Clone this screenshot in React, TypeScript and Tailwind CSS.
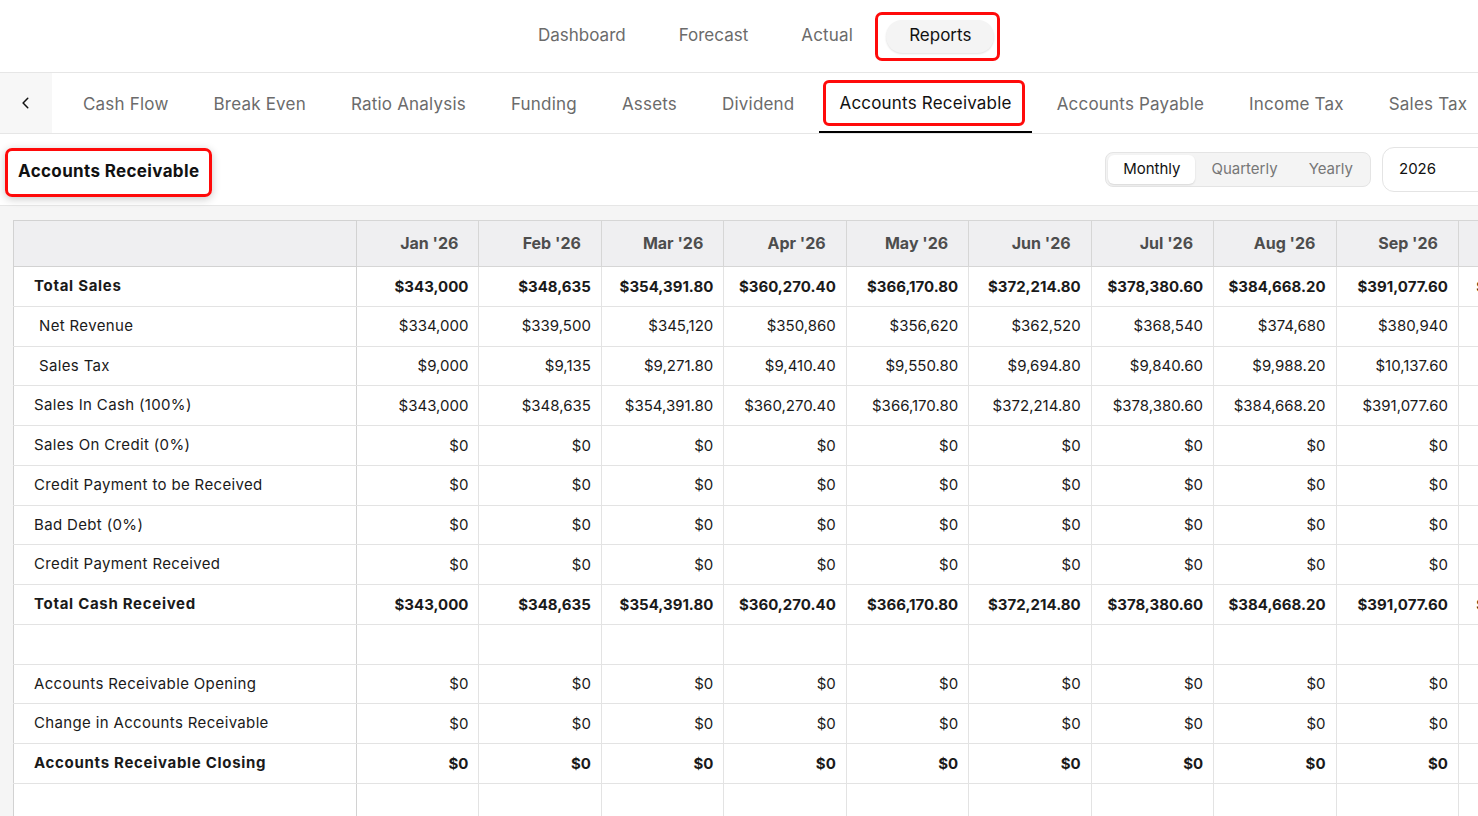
import React from "react";

const months = ["Jan '26","Feb '26","Mar '26","Apr '26","May '26","Jun '26","Jul '26","Aug '26","Sep '26","Oct '26","Nov '26","Dec '26"];
const net = [334000,339500,345120,350860,356620,362520,368540,374680,380940,387320,393820,400440];
const tax = [9000,9135,9271.8,9410.4,9550.8,9694.8,9840.6,9988.2,10137.6,10288.8,10441.8,10596.6];

const fmt = (v: number) => {
  const hasDec = Math.round(v * 100) % 100 !== 0;
  return "$" + v.toLocaleString("en-US", { minimumFractionDigits: hasDec ? 2 : 0, maximumFractionDigits: 2 });
};

const total = net.map((n, i) => n + tax[i]);
const zeros = months.map(() => 0);

type Row = { label: string; values?: number[]; bold?: boolean; indent?: boolean };
const rows: Row[] = [
  { label: "Total Sales", values: total, bold: true },
  { label: "Net Revenue", values: net, indent: true },
  { label: "Sales Tax", values: tax, indent: true },
  { label: "Sales In Cash (100%)", values: total },
  { label: "Sales On Credit (0%)", values: zeros },
  { label: "Credit Payment to be Received", values: zeros },
  { label: "Bad Debt (0%)", values: zeros },
  { label: "Credit Payment Received", values: zeros },
  { label: "Total Cash Received", values: total, bold: true },
  { label: "" },
  { label: "Accounts Receivable Opening", values: zeros },
  { label: "Change in Accounts Receivable", values: zeros },
  { label: "Accounts Receivable Closing", values: zeros, bold: true },
  { label: "" },
];

const tabs = ["Cash Flow","Break Even","Ratio Analysis","Funding","Assets","Dividend","Accounts Receivable","Accounts Payable","Income Tax","Sales Tax"];

export default function App() {
  return (
    <div className="w-[1478px] h-[816px] overflow-hidden bg-white font-['Inter',sans-serif] text-[#1a1a1a]">
      {/* Top nav */}
      <div className="h-[73px] border-b border-[#e6e6e6] flex items-center pl-[518px]">
        <div className="flex items-center gap-[13px] text-[17px] text-[#6b6b6b]">
          <div className="px-5">Dashboard</div>
          <div className="px-5">Forecast</div>
          <div className="px-5 tracking-[0.2px]">Actual</div>
          <div className="relative ml-[-11px]">
            <div className="ml-[11px] h-[33px] px-[23px] flex items-center rounded-full bg-[#f4f4f4] shadow-[0_1px_2px_rgba(0,0,0,0.12)] text-[#111]">Reports</div>
            <span className="absolute left-0 right-[-6px] top-[-8px] bottom-[-8px] border-[3px] border-[#ff0a0a] rounded-[7px] pointer-events-none" />
          </div>
        </div>
      </div>

      {/* Tabs */}
      <div className="h-[61px] border-b border-[#e6e6e6] flex overflow-hidden">
        <div className="w-[52px] shrink-0 h-full bg-[#f7f7f7] flex items-center justify-center">
          <svg width="14" height="14" viewBox="0 0 24 24" fill="none" stroke="#111" strokeWidth="2.6" strokeLinecap="round" strokeLinejoin="round"><path d="M15 4l-8 8 8 8" /></svg>
        </div>
        <div className="flex shrink-0 ml-[11px] gap-[5px] text-[17px] whitespace-nowrap tracking-[0.2px]">
          {tabs.map((t) =>
            t === "Accounts Receivable" ? (
              <div key={t} className="relative shrink-0 px-5 pt-[3px] flex items-center text-[#111] border-b-2 border-black">
                {t}
                <span className="absolute left-[4px] right-[7px] top-[7px] bottom-[5px] border-[3px] border-[#ff0a0a] rounded-[6px]" />
              </div>
            ) : (
              <div key={t} className="shrink-0 px-5 pt-[3px] flex items-center text-[#6b6b6b]">{t}</div>
            )
          )}
        </div>
      </div>

      {/* Header */}
      <div className="h-[72px] border-b border-[#e6e6e6] flex items-center pl-[5px]">
        <div className="h-[49px] px-[10px] flex items-center border-[3px] border-[#ff0a0a] rounded-[7px] shadow-[0_2px_8px_rgba(0,0,0,0.22)] font-bold text-[17px] tracking-[0.35px] text-[#111] mt-[5px]">
          Accounts Receivable
        </div>
        <div className="ml-auto flex items-center mr-[-44px]">
          <div className="h-[35px] flex items-center bg-[#f4f4f4] border border-[#e4e4e4] rounded-lg p-[2px] text-[15px]">
            <div className="h-full px-[15px] flex items-center bg-white rounded-md shadow-[0_1px_2px_rgba(0,0,0,0.12)] text-[#111]">Monthly</div>
            <div className="h-full px-[16px] flex items-center text-[#777]">Quarterly</div>
            <div className="h-full px-[15px] flex items-center text-[#777]">Yearly</div>
          </div>
          <div className="ml-[11px] w-[140px] h-[45px] border border-[#e4e4e4] rounded-xl flex items-center pl-4 text-[15px] text-[#111]">2026</div>
        </div>
      </div>

      {/* Table area */}
      <div className="bg-[#f5f5f5] pl-[13px] pt-[14px] h-full">
        <table className="table-fixed border-collapse bg-white w-[1812.4px] text-[15px]">
          <colgroup>
            <col className="w-[343px]" />
            {months.map((m) => <col key={m} className="w-[122.45px]" />)}
          </colgroup>
          <thead>
            <tr className="h-[46px] bg-[#efeff1]">
              <th className="border border-[#d2d2d2]" />
              {months.map((m) => (
                <th key={m} className="border border-[#d6d6d6] text-right pr-5 font-bold text-[16px] text-[#4d4d4d] pb-[2px]">{m}</th>
              ))}
            </tr>
          </thead>
          <tbody>
            {rows.map((r, i) => (
              <tr key={i} className="h-[39.75px]">
                <td className={`border-l border-r border-b border-l-[#d2d2d2] border-r-[#d2d2d2] border-b-[#e3e3e3] whitespace-nowrap ${r.indent ? "pl-[25px]" : "pl-5"} ${r.bold ? "font-bold tracking-[0.7px]" : "tracking-[0.35px]"}`}>{r.label}</td>
                {months.map((m, j) => (
                  <td key={m} className={`border-r border-b border-r-[#e3e3e3] border-b-[#e3e3e3] text-right pr-[10px] whitespace-nowrap ${r.bold ? "font-bold pt-[2px]" : "pt-[1px]"}`}>
                    {r.values ? fmt(r.values[j]) : ""}
                  </td>
                ))}
              </tr>
            ))}
          </tbody>
        </table>
      </div>
    </div>
  );
}
